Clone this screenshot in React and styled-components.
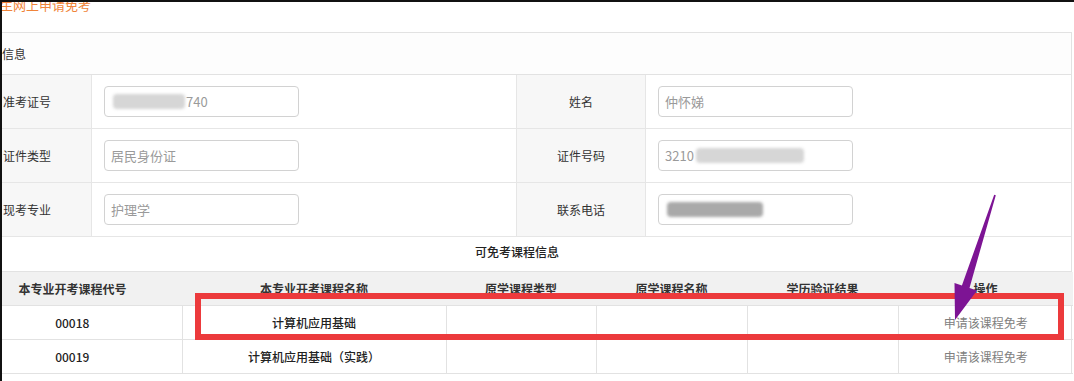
import React from "react"
import styled, { createGlobalStyle } from "styled-components"

const GlobalStyle = createGlobalStyle`
  body {
    margin: 0;
    background: #fff;
    font-family: "Noto Sans CJK SC", "Noto Sans", sans-serif;
  }
`

const basicRows = [
  { left: "准考证号", leftValue: "740", leftBlur: 72, right: "姓名", rightValue: "仲怀娣" },
  { left: "证件类型", leftValue: "居民身份证", right: "证件号码", rightValue: "3210", rightBlur: 108 },
  { left: "现考专业", leftValue: "护理学", right: "联系电话", rightBlur: 96, dark: true },
]

const courses = [
  { code: "00018", name: "计算机应用基础" },
  { code: "00019", name: "计算机应用基础（实践）" },
]

const columns = [
  { title: "本专业开考课程代号", width: 219 },
  { title: "本专业开考课程名称", width: 264 },
  { title: "原学课程类型", width: 150 },
  { title: "原学课程名称", width: 151 },
  { title: "学历验证结果", width: 151 },
  { title: "操作", width: 175 },
]

function Value({ value, blur, dark, blurFirst }) {
  if (blurFirst) {
    return (
      <Field>
        <Blur width={blur} dark={dark} />
        {value}
      </Field>
    )
  }
  return (
    <Field>
      {value}
      {blur ? <Blur width={blur} dark={dark} /> : null}
    </Field>
  )
}

export default function App() {
  return (
    <Frame>
      <GlobalStyle />
      <Title>考生网上申请免考</Title>
      <Panel>
        <Heading>考生信息</Heading>
        {basicRows.map((row, i) => (
          <FormRow key={i}>
            <Label>{row.left}</Label>
            <Cell>
              <Value value={row.leftValue} blur={row.leftBlur} blurFirst={i === 0} />
            </Cell>
            <Label divided>{row.right}</Label>
            <Cell>
              <Value value={row.rightValue} blur={row.rightBlur} dark={row.dark} />
            </Cell>
          </FormRow>
        ))}
        <SectionTitle>可免考课程信息</SectionTitle>
        <Table>
          <colgroup>
            {columns.map((c) => (
              <col key={c.title} style={{ width: c.width }} />
            ))}
          </colgroup>
          <thead>
            <tr>
              {columns.map((c) => (
                <Th key={c.title}>{c.title}</Th>
              ))}
            </tr>
          </thead>
          <tbody>
            {courses.map((c) => (
              <tr key={c.code}>
                <Td>{c.code}</Td>
                <Td>{c.name}</Td>
                <Td />
                <Td />
                <Td />
                <Td action>申请该课程免考</Td>
              </tr>
            ))}
          </tbody>
        </Table>
      </Panel>
      <Highlight />
      <Arrow viewBox="0 0 1074 381">
        <polygon
          points="994.2,194.8 995.8,195.2 969.5,287.9 977,290.5 955,320 954.5,283 961.9,285.5"
          fill="#7d1494"
        />
      </Arrow>
    </Frame>
  )
}

const Frame = styled.div`
  position: relative;
  width: 1072px;
  height: 379px;
  overflow: hidden;
  border-top: 2px solid #111;
  border-left: 2px solid #111;
  background: #fff;
`

const Title = styled.div`
  height: 30px;
  margin-left: -15px;
  margin-top: -4px;
  margin-bottom: 4px;
  font-size: 13px;
  line-height: 14px;
  color: #f0843a;
`

const Panel = styled.div`
  width: 1108px;
  margin-left: -40px;
  border: 1px solid #e2e2e2;
  border-bottom: none;
`

const Heading = styled.div`
  height: 41px;
  line-height: 41px;
  padding-left: 15px;
  font-size: 12px;
  color: #333;
  background: #fdfdfd;
  border-bottom: 1px solid #e2e2e2;
`

const FormRow = styled.div`
  display: grid;
  grid-template-columns: 129px 424px 130px 1fr;
  height: 53px;
  border-bottom: 1px solid #e6e6e6;
`

const Label = styled.div`
  display: flex;
  align-items: center;
  justify-content: center;
  background: #f7f7f7;
  border-right: 1px solid #e6e6e6;
  border-left: ${(p) => (p.divided ? "1px solid #e6e6e6" : "none")};
  font-size: 12px;
  color: #333;
`

const Cell = styled.div`
  display: flex;
  align-items: center;
  padding-left: 12px;
`

const Field = styled.div`
  display: flex;
  align-items: center;
  box-sizing: border-box;
  width: 195px;
  height: 31px;
  padding: 0 6px;
  border: 1px solid #d2d2d2;
  border-radius: 4px;
  background: #fff;
  font-size: 13px;
  color: #9a9a9a;
`

const Blur = styled.span`
  display: inline-block;
  width: ${(p) => p.width}px;
  height: 15px;
  margin: 0 1px 0 2px;
  border-radius: 4px;
  background: ${(p) => (p.dark ? "#a9a9a9" : "#d6d6d6")};
  filter: blur(1.5px);
`

const SectionTitle = styled.div`
  height: 34px;
  line-height: 30px;
  text-align: center;
  font-size: 12px;
  font-weight: 500;
  color: #222;
  border-bottom: 1px solid #e2e2e2;
`

const Table = styled.table`
  width: 1108px;
  table-layout: fixed;
  border-collapse: collapse;
  font-size: 12px;
`

const Th = styled.th`
  height: 33px;
  padding: 0;
  background: #f1f1f1;
  font-weight: 600;
  color: #333;
  border-bottom: 1px solid #e2e2e2;
`

const Td = styled.td`
  height: 33px;
  padding: 0;
  text-align: center;
  font-weight: ${(p) => (p.action ? 400 : 500)};
  color: ${(p) => (p.action ? "#808080" : "#222")};
  border-bottom: 1px solid #e2e2e2;
  border-left: 1px solid #e2e2e2;
  &:first-child {
    border-left: none;
  }
`

const Highlight = styled.div`
  position: absolute;
  left: 193px;
  top: 291px;
  width: 857px;
  height: 35px;
  border: 6px solid #ec3a3c;
  pointer-events: none;
`

const Arrow = styled.svg`
  position: absolute;
  left: -2px;
  top: -2px;
  width: 1074px;
  height: 381px;
  pointer-events: none;
`
